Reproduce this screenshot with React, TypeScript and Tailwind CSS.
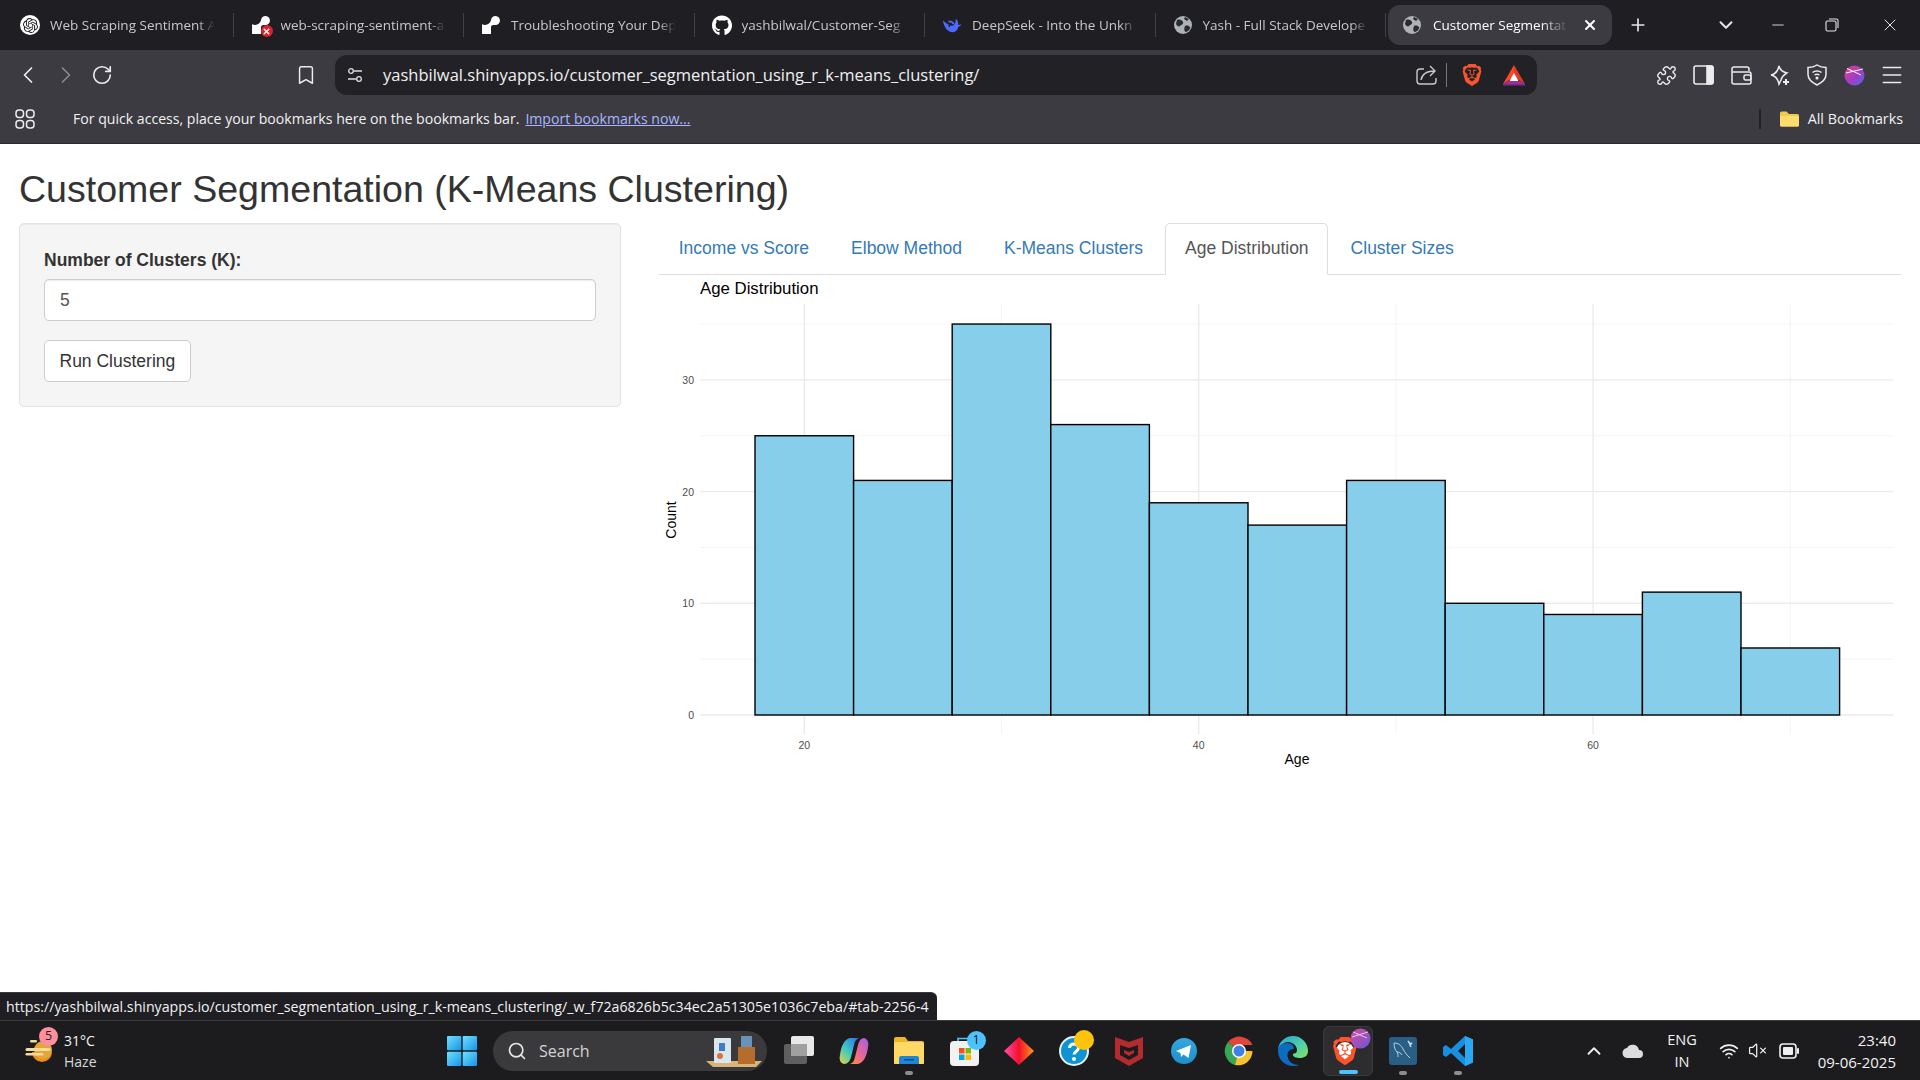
import React from 'react';
import { ChevronDown, ChevronLeft, ChevronRight, ChevronUp, Menu, Minus, Plus, Puzzle, RotateCw, Search, Bookmark, VolumeX, Wifi, X } from 'lucide-react';
import { FaGithub } from 'react-icons/fa';
import { SiBrave, SiOpenai, SiRender } from 'react-icons/si';

const chromeFont = "font-['Open_Sans','Noto_Sans',sans-serif]";

const Globe = () => (
  <svg width="20" height="20" viewBox="0 0 20 20">
    <circle cx="10" cy="10" r="9" fill="#aeb1b6" />
    <path d="M4 5c3-1 5 0 6 2s-2 3-3 4-3 0-4-2zM12 11c2-1 4 0 5 1s-2 5-4 5-2-4-1-6zM12 2l4 2-2 2-3-2z" fill="#2a2a2f" />
  </svg>
);

const Whale = () => (
  <svg width="22" height="20" viewBox="0 0 22 20">
    <path d="M1 5c1 7 5 13 11 13 3 0 5-2 6-6 1 0 3-1 3-3-1 1-2 1-3 1 0-3-1-6-3-7 0 3 0 5-2 7-2 2-6 0-12-5z" fill="#4d6bfe" />
    <path d="M7 6c3 0 5 1 6 3" stroke="#4d6bfe" strokeWidth="2" fill="none" />
    <circle cx="8" cy="11" r="1" fill="#1e1e23" />
  </svg>
);

const tabs = [
  { title: 'Web Scraping Sentiment A', icon: <span className="flex h-5 w-5 items-center justify-center rounded-full bg-white"><SiOpenai size={15} color="#1e1e23" /></span> },
  { title: 'web-scraping-sentiment-a', icon: <span className="relative flex h-5 w-5 items-center justify-center"><SiRender size={18} color="#ffffff" /><span className="absolute -bottom-0.5 -right-0.5 flex h-3 w-3 items-center justify-center rounded-full bg-[#d8232f]"><X size={9} strokeWidth={4} color="#fff" /></span></span> },
  { title: 'Troubleshooting Your Dep', icon: <SiRender size={18} color="#ffffff" /> },
  { title: 'yashbilwal/Customer-Seg', icon: <FaGithub size={21} color="#ffffff" /> },
  { title: 'DeepSeek - Into the Unkn', icon: <Whale /> },
  { title: 'Yash - Full Stack Develope', icon: <Globe /> },
];

const TabStrip = () => (
  <div className="flex h-[50px] items-center bg-[#1e1e23] pl-[3px] text-[13.5px] text-[#c8c8cb]">
    {tabs.map((t) => (
      <div key={t.title} className="flex h-6 w-[230.5px] shrink-0 items-center border-r border-[#414146] pl-[17px]">
        <span className="flex w-5 shrink-0 items-center justify-center">{t.icon}</span>
        <span className="ml-[10px] w-[168px] overflow-hidden whitespace-nowrap [mask-image:linear-gradient(to_right,black_88%,transparent_98%)]">{t.title}</span>
      </div>
    ))}
    <div className="ml-[2px] flex h-10 w-[224px] shrink-0 items-center rounded-xl bg-[#3b3b41] pl-[14px] text-white">
      <Globe />
      <span className="ml-[11px] w-[138px] overflow-hidden whitespace-nowrap [mask-image:linear-gradient(to_right,black_78%,transparent_98%)]">Customer Segmentat</span>
      <X size={16} strokeWidth={3} className="ml-[11px] shrink-0" />
    </div>
    <Plus size={20} strokeWidth={2} className="ml-[16px] shrink-0 text-[#e6e6e6]" />
    <ChevronDown size={22} strokeWidth={2.2} className="ml-[67px] shrink-0 text-[#e6e6e6]" />
    <Minus size={18} strokeWidth={1.2} className="ml-[32px] shrink-0 text-[#e6e6e6]" />
    <svg width="14" height="14" viewBox="0 0 14 14" fill="none" stroke="#e6e6e6" strokeWidth="1.1" className="ml-[38px] shrink-0">
      <rect x="1" y="3" width="10" height="10" rx="1.5" />
      <path d="M4 1h7.5A1.5 1.5 0 0 1 13 2.5V10" />
    </svg>
    <X size={20} strokeWidth={1.2} className="ml-[41px] shrink-0 text-[#e6e6e6]" />
  </div>
);

const ToolIcon = ({ children }: { children: React.ReactNode }) => (
  <span className="flex w-[37.6px] shrink-0 items-center justify-center">{children}</span>
);

const Toolbar = () => (
  <div className="flex h-[50px] items-center bg-[#3b3b41] py-[5px] text-[#ececec]">
    <ChevronLeft size={28} strokeWidth={1.5} className="ml-[14px] shrink-0" />
    <ChevronRight size={28} strokeWidth={1.5} className="ml-[10px] shrink-0 text-[#8a8a8e]" />
    <RotateCw size={22} strokeWidth={1.8} className="ml-[11px] shrink-0" />
    <Bookmark size={22} strokeWidth={1.6} className="ml-[182px] shrink-0" />
    <div className="ml-[18px] flex h-10 w-[1202px] shrink-0 items-center rounded-xl bg-[#222226]">
      <svg width="16" height="16" viewBox="0 0 16 16" fill="none" stroke="#e0e0e0" strokeWidth="1.3" className="ml-3 shrink-0">
        <circle cx="4" cy="4" r="2.3" /><path d="M7 4h8M1 12h8" /><circle cx="12" cy="12" r="2.3" />
      </svg>
      <span className="ml-[20px] w-[680px] shrink-0 whitespace-nowrap text-[16.5px] text-[#f0f0f0]">
        yashbilwal.shinyapps.io/customer_segmentation_using_r_k-means_clustering/
      </span>
      <svg width="22" height="22" viewBox="0 0 22 22" fill="none" stroke="#c9c9c9" strokeWidth="1.4" className="ml-[352px] shrink-0">
        <path d="M9 5H5a3 3 0 0 0-3 3v9a3 3 0 0 0 3 3h13a3 3 0 0 0 3-3v-3" />
        <path d="M6 16c1-6 6-9 14-9M15 2l5 5-5 5" />
      </svg>
      <span className="ml-[9px] h-6 w-px shrink-0 bg-[#77777b]" />
      <SiBrave size={22} color="#fb542b" className="ml-[14px] shrink-0" />
      <svg width="24" height="22" viewBox="0 0 24 22" className="ml-[19px] shrink-0">
        <path d="M12 1 1 20l11-7z" fill="#ff4724" /><path d="M12 1l11 19-11-7z" fill="#e23a1e" /><path d="M1 20h22v1.500H1z" fill="#7a2a8c" /><path d="M1 20l5-3h12l5 3z" fill="#9e2f8e" /><path d="M12 9l-4.500 8h9z" fill="#fff" />
      </svg>
    </div>
    <ToolIcon><span /></ToolIcon>
    <div className="ml-[73px] flex shrink-0 items-center">
      <ToolIcon><Puzzle size={21} strokeWidth={1.6} /></ToolIcon>
      <ToolIcon>
        <svg width="21" height="20" viewBox="0 0 21 20" fill="none" stroke="#ececec" strokeWidth="1.6">
          <rect x="1" y="1" width="19" height="18" rx="2" /><path d="M14 1h4a2 2 0 0 1 2 2v14a2 2 0 0 1-2 2h-4z" fill="#ececec" />
        </svg>
      </ToolIcon>
      <ToolIcon>
        <svg width="21" height="19" viewBox="0 0 21 19" fill="none" stroke="#ececec" strokeWidth="1.5">
          <path d="M1 5V3a2 2 0 0 1 2-2h13a2 2 0 0 1 2 2v2M1 5a1 1 0 0 0 1 1h16a2 2 0 0 1 2 2v8a2 2 0 0 1-2 2H3a2 2 0 0 1-2-2z" /><rect x="13" y="9" width="7" height="5" rx="1.5" />
        </svg>
      </ToolIcon>
      <ToolIcon>
        <svg width="21" height="21" viewBox="0 0 21 21" fill="none" stroke="#ececec" strokeWidth="1.5">
          <path d="M10 1c1 4 3 6 8 7-3 2-5 3-6 7l-2 4c-1-5-3-8-8-9 5-1 7-4 8-9z" /><path d="M17 14v6M14 17h6" strokeWidth="2" />
        </svg>
      </ToolIcon>
      <ToolIcon>
        <svg width="20" height="22" viewBox="0 0 20 22" fill="none" stroke="#ececec" strokeWidth="1.5">
          <path d="M10 1c3 2 5 2.500 9 2.500v7c0 5-4 8-9 10.500-5-2.500-9-5.500-9-10.500v-7C5 3.500 7 3 10 1z" /><path d="M5.500 8.500c2.500-2 6.500-2 9 0M7.500 11c1.500-1 3.500-1 5 0" /><circle cx="10" cy="14" r=".8" fill="#ececec" />
        </svg>
      </ToolIcon>
      <ToolIcon>
        <svg width="21" height="21" viewBox="0 0 21 21">
          <defs><linearGradient id="avatar" x1="0" y1="0" x2="1" y2="1"><stop offset="0" stopColor="#e6417f" /><stop offset=".55" stopColor="#a13cc8" /><stop offset="1" stopColor="#4a6fe0" /></linearGradient></defs>
          <circle cx="10.500" cy="10.500" r="10" fill="url(#avatar)" />
          <path d="M3 3.500 17 10M2 8 19 4" stroke="#fff" strokeWidth="1" />
        </svg>
      </ToolIcon>
      <ToolIcon><Menu size={26} strokeWidth={1.4} /></ToolIcon>
    </div>
  </div>
);

const BookmarksBar = () => (
  <div className="flex h-[44px] items-center border-b border-[#2b2b2f] bg-[#3b3b41] pb-[6px] text-[14.1px] text-[#f2f2f2]">
    <svg width="20" height="20" viewBox="0 0 20 20" fill="none" stroke="#ececec" strokeWidth="1.5" className="ml-[15px] shrink-0">
      <rect x="1" y="1" width="7.500" height="7.500" rx="3" /><rect x="11.500" y="1" width="7.500" height="7.500" rx="3" />
      <rect x="1" y="11.500" width="7.500" height="7.500" rx="3" /><rect x="11.500" y="11.500" width="7.500" height="7.500" rx="3" />
    </svg>
    <span className="ml-[38px] whitespace-nowrap">For quick access, place your bookmarks here on the bookmarks bar.</span>
    <span className="ml-[6px] whitespace-nowrap text-[#aab6ff] underline">Import bookmarks now...</span>
    <span className="ml-auto h-5 w-[2px] bg-[#222226]" />
    <svg width="19" height="16" viewBox="0 0 19 16" className="ml-[19px] shrink-0">
      <path d="M0 2a1.500 1.500 0 0 1 1.500-1.500h5L9 3h8.500A1.500 1.500 0 0 1 19 4.500V14a1.500 1.500 0 0 1-1.500 1.500h-16A1.500 1.500 0 0 1 0 14z" fill="#f2c94c" />
      <path d="M0 5h19v9a1.500 1.500 0 0 1-1.500 1.500h-16A1.500 1.500 0 0 1 0 14z" fill="#ffdc6e" />
    </svg>
    <span className="ml-[9px] mr-[17px] whitespace-nowrap text-[14.3px]">All Bookmarks</span>
  </div>
);

const counts = [25, 21, 35, 26, 19, 17, 21, 10, 9, 11, 6];
const xOf = (age: number) => 804.3 + (age - 20) * 19.72;
const yOf = (n: number) => 715 - n * 11.17;

const AgeChart = () => (
  <svg width="1242" height="500" viewBox="659 275 1242 500" className="block font-['Liberation_Sans',Arial,sans-serif]">
    <text x="700" y="294" fontSize="16.800" fill="#000">Age Distribution</text>
    {[5, 15, 25, 35].map((n) => (
      <line key={n} x1="700" x2="1893.500" y1={yOf(n)} y2={yOf(n)} stroke="#f1f1f1" strokeWidth="0.8" />
    ))}
    {[30, 50, 70].map((a) => (
      <line key={a} x1={xOf(a)} x2={xOf(a)} y1="304" y2="734" stroke="#f1f1f1" strokeWidth="0.8" />
    ))}
    {[0, 10, 20, 30].map((n) => (
      <line key={n} x1="700" x2="1893.500" y1={yOf(n)} y2={yOf(n)} stroke="#ebebeb" strokeWidth="1.400" />
    ))}
    {[20, 40, 60].map((a) => (
      <line key={a} x1={xOf(a)} x2={xOf(a)} y1="304" y2="734" stroke="#ebebeb" strokeWidth="1.400" />
    ))}
    {counts.map((c, i) => (
      <rect key={i} x={xOf(17.5 + i * 5)} y={yOf(c)} width={5 * 19.72} height={c * 11.17} fill="#87ceeb" stroke="#000" strokeWidth="1.400" />
    ))}
    {[0, 10, 20, 30].map((n) => (
      <text key={n} x="694" y={yOf(n) + 4} textAnchor="end" fontSize="10.500" fill="#4d4d4d">{n}</text>
    ))}
    {[20, 40, 60].map((a) => (
      <text key={a} x={xOf(a)} y="749" textAnchor="middle" fontSize="10.500" fill="#4d4d4d">{a}</text>
    ))}
    <text x="1297" y="764" textAnchor="middle" fontSize="14" fill="#000">Age</text>
    <text transform="translate(676 520) rotate(-90)" textAnchor="middle" fontSize="14" fill="#000">Count</text>
  </svg>
);

const navItems = ['Income vs Score', 'Elbow Method', 'K-Means Clusters', 'Age Distribution', 'Cluster Sizes'];

const Page = () => (
  <div className="relative min-h-0 flex-1 bg-white px-[19px] font-['Liberation_Sans',Arial,sans-serif] text-[17.5px] text-[#333]">
    <h2 className="mt-[25px] h-[54px] text-[37.55px] leading-[41px] text-[#333]">Customer Segmentation (K-Means Clustering)</h2>
    <div className="grid grid-cols-[602px_1242px] gap-x-[38px]">
      <div className="h-[184px] rounded-[5px] border border-[#e3e3e3] bg-[#f5f5f5] p-[24px] shadow-[inset_0_1px_1px_rgba(0,0,0,0.05)]">
        <label className="block text-[17.5px] font-bold leading-[25px]">Number of Clusters (K):</label>
        <div className="mt-[6px] flex h-[42px] items-center rounded-[5px] border border-[#ccc] bg-white px-[15px] text-[#555] shadow-[inset_0_1px_1px_rgba(0,0,0,0.075)]">5</div>
        <button className="mt-[18.500px] block h-[42px] rounded-[5px] border border-[#ccc] bg-white px-[14.500px] pt-[1px] text-[17.5px] text-[#333]">Run Clustering</button>
      </div>
      <div>
        <div className="flex h-[52px] border-b border-[#ddd]">
          {navItems.map((n) => (
            <div
              key={n}
              className={n === 'Age Distribution'
                ? 'mr-[2.500px] flex h-[52px] items-center rounded-t-[5px] border border-[#ddd] border-b-white bg-white px-[18.750px] pb-[1px] text-[#555]'
                : 'mr-[2.500px] flex h-[51px] items-center border border-transparent px-[18.750px] text-[#337ab7]'}
            >
              {n}
            </div>
          ))}
        </div>
        <AgeChart />
      </div>
    </div>
    <div className={`absolute bottom-0 left-0 flex h-[28px] w-[937px] items-center rounded-tr-md border-t border-[#3a3a3e] bg-[#1e1e23] pl-[6px] text-[14.2px] text-[#f2f2f2] ${chromeFont}`}>
      https://yashbilwal.shinyapps.io/customer_segmentation_using_r_k-means_clustering/_w_f72a6826b5c34ec2a51305e1036c7eba/#tab-2256-4
    </div>
  </div>
);

const Slot = ({ children, dot, active }: { children: React.ReactNode; dot?: boolean; active?: boolean }) => (
  <div className={active ? 'relative mx-[2.450px] flex h-[50px] w-[50px] shrink-0 items-center justify-center rounded-md border border-[#3a3a3c] bg-[#2d2d2f]' : 'relative flex h-[50px] w-[54.900px] shrink-0 items-center justify-center'}>
    {children}
    {dot && <span className="absolute bottom-[1px] h-[4px] w-[8px] rounded-full bg-[#8d8d8d]" />}
    {active && <span className="absolute bottom-[1px] h-[4px] w-[19px] rounded-full bg-[#4cc2ff]" />}
  </div>
);

const Taskbar = () => (
  <div className={`flex h-[60px] shrink-0 items-center border-t border-[#3a3a3a] bg-[#1c1c1e] text-[#f2f2f2] ${chromeFont}`}>
    <div className="relative ml-[25px] flex w-[32px] shrink-0 items-center">
      <svg width="30" height="26" viewBox="0 0 30 26">
        <path d="M7 11a10 10 0 0 0 20 0z" fill="#ee8f1d" transform="translate(0 3)" />
        <circle cx="18" cy="12" r="9" fill="#e3a63a" />
        <rect x="5" y="2" width="7" height="2.500" rx="1.200" fill="#f3d98f" />
        <rect x="0.500" y="10" width="25" height="3" rx="1.500" fill="#f5dc9a" />
        <rect x="0.500" y="15" width="18" height="2.500" rx="1.200" fill="#f5dc9a" />
      </svg>
      <span className="absolute left-[14px] top-[-11px] flex h-[19px] w-[19px] items-center justify-center rounded-full bg-[#ff8f9c] text-[12.5px] text-[#222]">5</span>
    </div>
    <div className="ml-[7px] w-[60px] shrink-0 text-[14px] leading-[21px]">
      <div>31°C</div>
      <div className="text-[#d8d8d8]">Haze</div>
    </div>
    <svg width="30" height="30" viewBox="0 0 30 30" className="ml-[323px] shrink-0">
      <defs><linearGradient id="win" x1="0" y1="0" x2="1" y2="1"><stop offset="0" stopColor="#6fe0ff" /><stop offset="1" stopColor="#1594e8" /></linearGradient></defs>
      <rect x="0" y="0" width="14.300" height="14.300" rx="1" fill="url(#win)" /><rect x="15.700" y="0" width="14.300" height="14.300" rx="1" fill="url(#win)" />
      <rect x="0" y="15.700" width="14.300" height="14.300" rx="1" fill="url(#win)" /><rect x="15.700" y="15.700" width="14.300" height="14.300" rx="1" fill="url(#win)" />
    </svg>
    <div className="ml-[16px] flex h-10 w-[274px] shrink-0 items-center rounded-full bg-[#3a3a3c] pl-[14px]">
      <Search size={20} strokeWidth={2} className="text-[#e6e6e6]" />
      <span className="ml-[12px] text-[16px] text-[#d4d4d4]">Search</span>
      <svg width="60" height="36" viewBox="0 0 60 36" className="ml-auto mr-[4px]">
        <path d="M3 28h56l-6 6H10z" fill="#d9b475" />
        <rect x="11" y="5" width="17" height="25" rx="1" fill="#d8e6f0" />
        <path d="M16 10h6v8h-6z" fill="#3f7cc4" /><circle cx="17" cy="23" r="3" fill="#e0703a" />
        <rect x="35" y="14" width="17" height="17" fill="#b56d2d" />
        <rect x="38" y="3" width="11" height="11" fill="#6b92b8" />
      </svg>
    </div>
    <div className="ml-[5px] flex shrink-0 items-center">
      <Slot>
        <svg width="30" height="29" viewBox="0 0 30 29">
          <rect x="0" y="8" width="23" height="20" rx="2" fill="#5f5f5f" /><rect x="7" y="0" width="23" height="20" rx="2" fill="#e8e8e8" /><rect x="7" y="8" width="16" height="12" fill="#a0a0a0" />
        </svg>
      </Slot>
      <Slot>
        <svg width="30" height="28" viewBox="0 0 30 28">
          <defs>
            <linearGradient id="cpA" x1="0.800" y1="0" x2="0" y2="1"><stop offset="0" stopColor="#2f7de8" /><stop offset=".5" stopColor="#3dcbc0" /><stop offset="1" stopColor="#e9d33a" /></linearGradient>
            <linearGradient id="cpB" x1="1" y1="0" x2="0" y2="1"><stop offset="0" stopColor="#a45ce8" /><stop offset=".6" stopColor="#f06a8a" /><stop offset="1" stopColor="#f59a34" /></linearGradient>
          </defs>
          <path d="M11 1h9c-3 1-4 3-5 7l-3 12c-1 4-3 7-7 7-4-1-5-5-4-9C2 10 5 2 11 1z" fill="url(#cpA)" />
          <path d="M19 27h-8c3-1 4-3 5-7l3-12c1-4 3-7 6-7 4 1 5 5 4 9-1 8-4 16-10 17z" fill="url(#cpB)" />
        </svg>
      </Slot>
      <Slot dot>
        <svg width="30" height="27" viewBox="0 0 30 27">
          <path d="M0 2a2 2 0 0 1 2-2h9l3 4h14a2 2 0 0 1 2 2v20a1 1 0 0 1-1 1H1a1 1 0 0 1-1-1z" fill="#f0b429" />
          <rect x="0" y="5" width="30" height="22" rx="1.500" fill="#ffd965" />
          <path d="M5 27v-6a2 2 0 0 1 2-2h16a2 2 0 0 1 2 2v6z" fill="#1f86d6" /><rect x="10" y="22" width="10" height="1.500" fill="#0d4f8a" />
        </svg>
      </Slot>
      <Slot>
        <div className="relative">
          <svg width="29" height="30" viewBox="0 0 29 30">
            <path d="M8 6V2.500h13V6" fill="none" stroke="#4cc2ff" strokeWidth="1.600" />
            <rect x="0" y="5" width="29" height="25" rx="4" fill="#f2f2f2" />
            <rect x="9" y="12" width="5.500" height="5.500" fill="#f25022" /><rect x="15.500" y="12" width="5.500" height="5.500" fill="#7fba00" />
            <rect x="9" y="18.500" width="5.500" height="5.500" fill="#00a4ef" /><rect x="15.500" y="18.500" width="5.500" height="5.500" fill="#ffb900" />
          </svg>
          <span className="absolute -right-[7px] -top-[5px] flex h-[19px] w-[19px] items-center justify-center rounded-full bg-[#4cc2ff] text-[12px] text-[#111]">1</span>
        </div>
      </Slot>
      <Slot>
        <svg width="30" height="28" viewBox="0 0 30 28">
          <defs><linearGradient id="dia" x1="0" y1="0" x2="1" y2="0"><stop offset="0" stopColor="#ff4fb0" /><stop offset=".5" stopColor="#f2102a" /><stop offset="1" stopColor="#ff9a1a" /></linearGradient></defs>
          <path d="M15 0 30 14 15 28 0 14z" fill="url(#dia)" />
        </svg>
      </Slot>
      <Slot>
        <div className="relative">
          <svg width="30" height="30" viewBox="0 0 30 30">
            <circle cx="15" cy="15" r="14" fill="#0f94d2" stroke="#e8f4fa" strokeWidth="2" />
            <path d="M10.500 12c0-5.500 9-5.500 9 0 0 3.500-4.500 3.500-4.500 6.500" fill="none" stroke="#fff" strokeWidth="3" /><circle cx="15" cy="23" r="2" fill="#fff" />
          </svg>
          <span className="absolute -right-[5px] -top-[6px] h-5 w-5 rounded-full bg-[#ffc30b]" />
        </div>
      </Slot>
      <Slot>
        <svg width="28" height="30" viewBox="0 0 28 30">
          <path d="M0 1 14 6 28 1v21l-14 8-14-8z" fill="#b52a2e" /><path d="M5 9l9 3 9-3v10l-9 5-9-5z" fill="#1c1c1e" /><path d="M9 14l5 2 5-2v3l-5 3-5-3z" fill="#b52a2e" />
        </svg>
      </Slot>
      <Slot>
        <svg width="26" height="26" viewBox="0 0 26 26">
          <defs><linearGradient id="tg" x1="0" y1="0" x2="0" y2="1"><stop offset="0" stopColor="#35a8de" /><stop offset="1" stopColor="#1d8fc9" /></linearGradient></defs>
          <circle cx="13" cy="13" r="13" fill="url(#tg)" />
          <path d="M5 13 20 7l-2.500 13-5-3.500-2.500 2.500-.5-4z" fill="#fff" />
        </svg>
      </Slot>
      <Slot>
        <svg width="30" height="30" viewBox="0 0 30 30">
          <path d="M15 15 4 6a14.500 14.500 0 0 1 24.500 3H15z" fill="#e0473a" />
          <path d="M15 15 4 6a14.500 14.500 0 0 0 7 23l6-9z" fill="#3aa655" />
          <path d="M15 15h13.500A14.500 14.500 0 0 1 11 29z" fill="#f6c32c" />
          <circle cx="15" cy="15" r="7" fill="#fff" /><circle cx="15" cy="15" r="5.500" fill="#3f7fe8" />
        </svg>
      </Slot>
      <Slot>
        <svg width="30" height="30" viewBox="0 0 30 30">
          <defs><linearGradient id="edge" x1="0" y1="0" x2="1" y2="1"><stop offset="0" stopColor="#2b9fd8" /><stop offset=".6" stopColor="#4ed4a5" /><stop offset="1" stopColor="#8be05a" /></linearGradient></defs>
          <path d="M15 0a15 15 0 0 1 15 15c0 5-4 7-8 7-3 0-8-1-7-4 1-1 4 0 4-4 0-4-4-8-9-8-5 0-8 4-10 7C1 6 7 0 15 0z" fill="url(#edge)" />
          <path d="M0 14c0-4 4-7 9-7 5 0 7 3 7 6-4 0-8 3-6 9 1 4 5 7 11 7-2 1-4 1-6 1A15 15 0 0 1 0 14z" fill="#0c6cbf" />
        </svg>
      </Slot>
      <Slot active>
        <div className="relative -ml-[6px]">
          <span className="absolute left-[5px] top-[5px] h-[18px] w-[18px] rounded-full bg-white" />
          <SiBrave size={28} color="#fb542b" className="relative" />
          <svg width="21" height="21" viewBox="0 0 21 21" className="absolute -right-[12px] -top-[9px]">
            <defs><linearGradient id="ava2" x1="0" y1="0" x2="1" y2="1"><stop offset="0" stopColor="#d84aa0" /><stop offset="1" stopColor="#6a58d8" /></linearGradient></defs>
            <circle cx="10.500" cy="10.500" r="10" fill="url(#ava2)" />
            <path d="M3 4 17 10M2 9 18 4" stroke="#f3d5ea" strokeWidth="0.900" />
          </svg>
        </div>
      </Slot>
      <Slot dot>
        <span className="flex h-[28px] w-[28px] items-center justify-center rounded-[3px] bg-[#2a5f85]">
          <svg width="24" height="24" viewBox="0 0 24 24" fill="none" stroke="#c7dbe9" strokeWidth="0.900">
            <path d="M3 4c4 0 7 2 9 6 2 4 4 6 7 9M3 4c0 4 1 7 3 9 1 1 1 3 1 5M6 13c2 0 4 1 5 3" />
            <path d="M17 2l2 3 2-1-2 2 1 2" strokeWidth="1.500" />
          </svg>
        </span>
      </Slot>
      <Slot dot>
        <svg width="30" height="30" viewBox="0 0 30 30">
          <path d="M22 0 30 3.500v23L22 30 8 17l-5 4-3-2v-8l3-2 5 4zm0 8-7 7 7 7z" fill="#1a8fe0" />
          <path d="M22 0l8 3.500v23L22 30z" fill="#2ba8f2" />
        </svg>
      </Slot>
    </div>
    <div className="ml-auto flex shrink-0 items-center pr-[24px]">
      <ChevronUp size={22} strokeWidth={2} className="mr-[17px] text-[#eee]" />
      <svg width="22" height="16" viewBox="0 0 22 16" className="mr-[19px]">
        <path d="M6 15a5 5 0 0 1-1-10 6.500 6.500 0 0 1 12 2 4 4 0 0 1 0 8z" fill="#dcdcdc" />
      </svg>
      <div className="w-[38px] text-center text-[14.5px] leading-[22px]">
        <div>ENG</div>
        <div>IN</div>
      </div>
      <Wifi size={20} strokeWidth={2} className="ml-[18px] text-[#eee]" />
      <VolumeX size={19} strokeWidth={1.6} className="ml-[9px] text-[#eee]" />
      <svg width="20" height="16" viewBox="0 0 20 16" className="ml-[12px]">
        <rect x="1" y="1" width="16" height="14" rx="3" fill="none" stroke="#eee" strokeWidth="1.600" /><rect x="4" y="4" width="10" height="8" rx="1" fill="#eee" /><rect x="18" y="5" width="2" height="6" rx="1" fill="#eee" />
      </svg>
      <div className="ml-[17px] w-[80px] whitespace-nowrap text-right text-[15px] leading-[22px]">
        <div>23:40</div>
        <div>09-06-2025</div>
      </div>
    </div>
  </div>
);

export default function App() {
  return (
    <div className="flex h-screen w-full flex-col overflow-hidden">
      <div className={chromeFont}>
        <TabStrip />
        <Toolbar />
        <BookmarksBar />
      </div>
      <Page />
      <Taskbar />
    </div>
  );
}
